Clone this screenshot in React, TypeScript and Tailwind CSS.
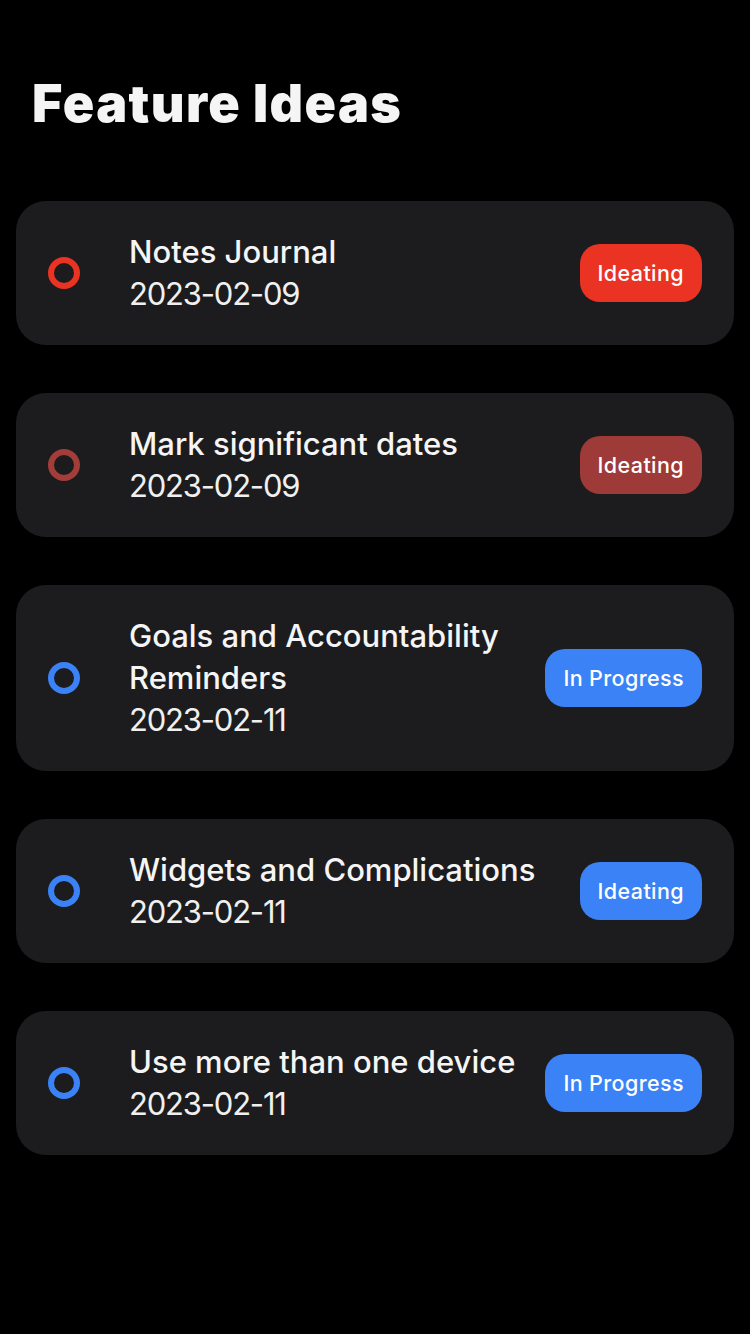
import React from 'react';

type Idea = {
  title: string;
  date: string;
  status: string;
  tone: 'red' | 'maroon' | 'blue';
};

const ideas: Idea[] = [
  { title: 'Notes Journal', date: '2023-02-09', status: 'Ideating', tone: 'red' },
  { title: 'Mark significant dates', date: '2023-02-09', status: 'Ideating', tone: 'maroon' },
  { title: 'Goals and Accountability Reminders', date: '2023-02-11', status: 'In Progress', tone: 'blue' },
  { title: 'Widgets and Complications', date: '2023-02-11', status: 'Ideating', tone: 'blue' },
  { title: 'Use more than one device', date: '2023-02-11', status: 'In Progress', tone: 'blue' },
];

const ringTone = {
  red: 'border-[#ea3323]',
  maroon: 'border-[#a33d3a]',
  blue: 'border-[#3b82f6]',
};

const badgeTone = {
  red: 'bg-[#ea3323]',
  maroon: 'bg-[#9e3a37]',
  blue: 'bg-[#3b82f6]',
};

export default function App() {
  return (
    <div className="min-h-[1334px] w-[750px] bg-black font-['Inter','Noto_Sans',sans-serif] text-white">
      <h1 className="px-[32px] pt-[72px] text-[52px] leading-[64px] font-black tracking-[1.4px] text-[#f5f5f5]">
        Feature Ideas
      </h1>

      <div className="mt-[65px] flex flex-col gap-[48px] px-[16px]">
        {ideas.map((idea) => (
          <div
            key={idea.title}
            className="flex items-center rounded-[30px] bg-[#1c1c1e] py-[30px] pl-[32px] pr-[32px]"
          >
            {/* status ring */}
            <div className={`h-[32px] w-[32px] shrink-0 rounded-full border-[6px] ${ringTone[idea.tone]}`} />

            <div className="ml-[49px] min-w-0 flex-1 pr-[24px]">
              <div className="text-[31px] leading-[42px] font-medium text-[#f5f5f5]">{idea.title}</div>
              <div className="text-[31px] leading-[42px] font-normal tracking-[-1.2px] text-[#f0f0f0]">{idea.date}</div>
            </div>

            <div
              className={`shrink-0 rounded-[20px] px-[18px] py-[13px] text-[21.5px] leading-[32px] font-medium tracking-[0.4px] ${badgeTone[idea.tone]}`}
            >
              {idea.status}
            </div>
          </div>
        ))}
      </div>
    </div>
  );
}
